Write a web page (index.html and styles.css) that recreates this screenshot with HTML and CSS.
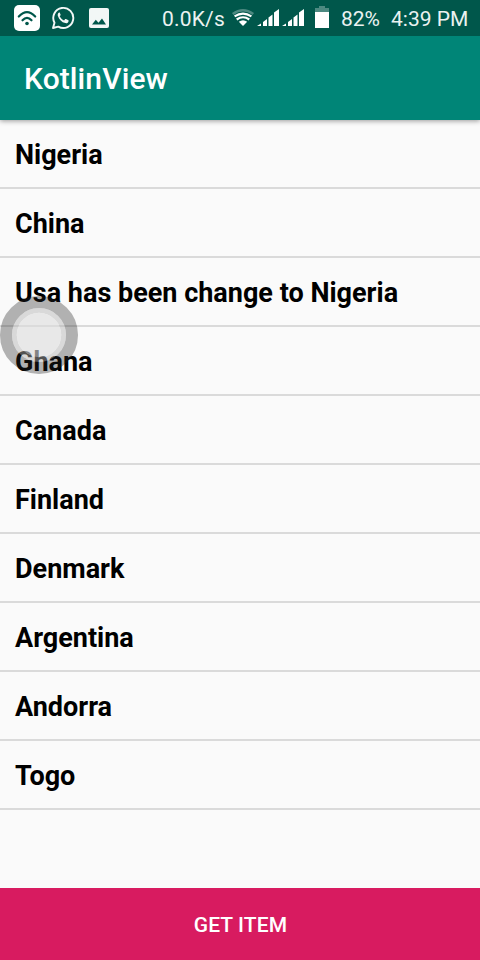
FILE: index.html
```html
<!DOCTYPE html>
<html lang="en">
<head>
<meta charset="utf-8">
<title>KotlinView</title>
<link rel="stylesheet" href="styles.css">
</head>
<body>
<div class="screen">
  <div class="status">
    <svg class="wifi-app" width="26" height="26" viewBox="0 0 26 26"><rect width="26" height="26" rx="5" fill="#fff"/><g fill="none" stroke="#00574b" stroke-width="2.2" stroke-linecap="round"><path d="M4.800 11.500Q13 2.800 21.200 11.500"/><path d="M8.500 15.300Q13 10.300 17.500 15.300"/></g><circle cx="13" cy="18.500" r="1.800" fill="#00574b"/></svg>
    <svg class="whatsapp" width="24" height="24" viewBox="0 0 24 24"><path d="M2 22l1.500-5.300A10 10 0 1 1 7.300 20.600z" fill="none" stroke="#f2f7f6" stroke-width="1.900" stroke-linejoin="round"/><path d="M8.200 6.400c-1.300.6-1.800 2-1.300 3.500 1.200 3.600 3.800 6.200 7.400 7.200 1.500.4 3.100-.5 3.300-2.200l-.1-.7-2.600-1.300-.7.200-1.100 1.300c-2-.8-3.500-2.200-4.400-4.100l1-1.300-1-2.400z" fill="#f2f7f6"/></svg>
    <svg class="photo" width="20" height="20" viewBox="0 0 20 20"><rect width="20" height="20" rx="2" fill="#f2f7f6"/><path d="M3 16.500l3.800-4.800 2.700 3 3.500-4.200 4 6z" fill="#00574b"/></svg>
    <span class="speed">0.0K/s</span>
    <svg class="wifi" width="22" height="17" viewBox="0 0 22 17"><path d="M0 4Q11-4 22 4L20.500 6Q11-.8 1.500 6z" fill="#4d8981"/><g fill="none" stroke="#fff" stroke-width="2.200"><path d="M2.600 7.400Q11 1.800 19.400 7.400"/><path d="M4.700 10.500Q11 6 17.300 10.500"/></g><path d="M6.800 12.800Q11 9.800 15.200 12.800L11 17z" fill="#fff"/></svg>
    <svg class="signal" width="48" height="18" viewBox="0 0 48 18"><g id="bars" fill="#fff"><path d="M0 17l4-2.500V17zM6 17v-4l4-3v7zM11.500 17V8.500l4-3V17zM17 17V3.500L22 0v17z"/></g><use href="#bars" x="25"/></svg>
    <svg class="battery" width="14" height="22" viewBox="0 0 14 22"><path d="M4 0h6v2h4v4H0V2h4z" fill="#4d8981"/><path d="M0 6h14v16H0z" fill="#fff"/></svg>
    <span class="percent">82%</span>
    <span class="clock">4:39 PM</span>
  </div>
  <header class="toolbar">KotlinView</header>
  <ul class="list">
    <li>Nigeria</li>
    <li>China</li>
    <li>Usa has been change to Nigeria</li>
    <li>Ghana</li>
    <li>Canada</li>
    <li>Finland</li>
    <li>Denmark</li>
    <li>Argentina</li>
    <li>Andorra</li>
    <li>Togo</li>
  </ul>
  <button class="action">GET ITEM</button>
  <svg class="assist" width="78" height="78" viewBox="0 0 78 78"><g fill="none"><circle cx="39" cy="39" r="33" stroke="#222" stroke-opacity=".34" stroke-width="12"/><circle cx="39" cy="39" r="24.600" stroke="#b2b2b2" stroke-opacity=".46" stroke-width="4.800"/></g><circle cx="39" cy="39" r="22.200" fill="#dcdcdc" fill-opacity=".6"/></svg>
</div>
</body>
</html>
```
FILE: styles.css
```css
* { box-sizing: border-box; }
body { margin: 0; font-family: Roboto, "Liberation Sans", sans-serif; }
.screen {
  position: relative;
  display: flex;
  flex-direction: column;
  width: 480px;
  height: 960px;
  overflow: hidden;
  background: #fafafa;
}
.status {
  position: relative;
  z-index: 2;
  display: flex;
  flex: none;
  height: 36px;
  align-items: flex-start;
  background: #00574b;
  color: #ebf2f1;
  font-size: 21px;
  line-height: 25px;
  white-space: nowrap;
}
.status svg { flex: none; }
.wifi-app { margin: 5px 0 0 14px; }
.whatsapp { margin: 6px 0 0 11px; }
.photo { margin: 8px 0 0 14px; }
.speed { width: 70px; margin: 7px 0 0 53px; letter-spacing: .2px; }
.wifi { margin: 9px 0 0 0; }
.signal { margin: 9px 0 0 3px; }
.battery { margin: 6px 0 0 10px; }
.percent { width: 50px; margin: 7px 0 0 12px; }
.clock { margin-top: 7px; }
.toolbar {
  flex: none;
  height: 84px;
  padding-left: 24px;
  background: #008577;
  color: #fff;
  font-size: 30px;
  font-weight: 500;
  letter-spacing: .1px;
  line-height: 85px;
  box-shadow: 0 1px 5px rgba(0, 0, 0, .4);
  z-index: 1;
}
.list { flex: 1; margin: 0; padding: 0; list-style: none; }
.list li {
  height: 69px;
  padding-left: 15px;
  border-bottom: 2px solid #dadada;
  color: #000;
  font-size: 27px;
  font-weight: 700;
  line-height: 71px;
}
.action {
  flex: none;
  height: 72px;
  padding: 1px 0 0 1px;
  border: 0;
  background: #d81b60;
  color: #fff;
  font: 500 21px Roboto, "Liberation Sans", sans-serif;
  letter-spacing: .1px;
}
.assist { position: absolute; left: 0; top: 296px; z-index: 2; }
```
